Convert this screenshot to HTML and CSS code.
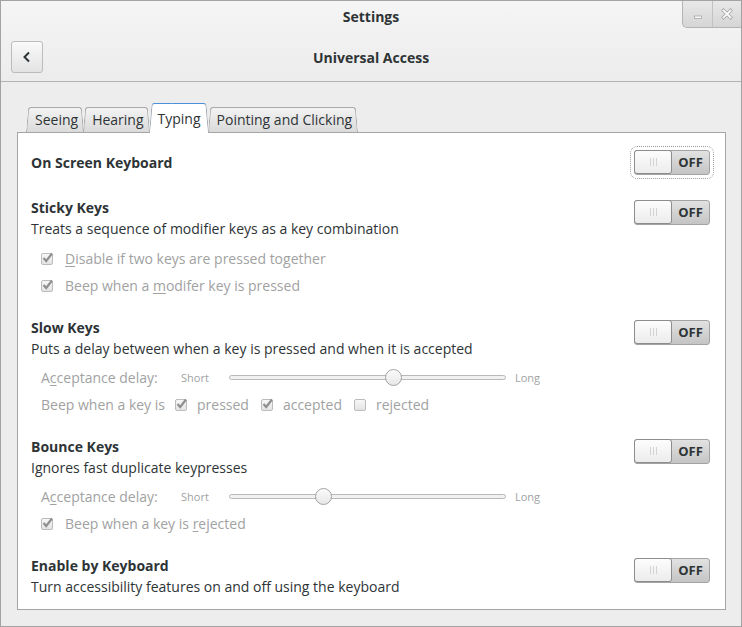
FILE: index.html
```html
<!DOCTYPE html>
<html>
<head>
<meta charset="utf-8">
<link rel="stylesheet" href="styles.css">
</head>
<body>
<div class="window">
  <header class="header">
    <div class="titlebar">
      <span></span>
      <span class="title">Settings</span>
      <div class="wm">
        <span class="wm-btn">
          <svg width="10" height="10" viewBox="0 0 10 10"><rect x="1.5" y="7" width="7" height="2.5" fill="#fbfbfb" stroke="#a6a6a6" stroke-width="0.8"/></svg>
        </span>
        <span class="wm-btn sep">
          <svg width="12" height="12" viewBox="0 0 12 12"><path d="M2.5 2.5 L9.5 9.5 M9.5 2.5 L2.5 9.5" stroke="#a6a6a6" stroke-width="3.4" stroke-linecap="square" fill="none"/><path d="M2.5 2.5 L9.5 9.5 M9.5 2.5 L2.5 9.5" stroke="#fbfbfb" stroke-width="1.8" stroke-linecap="square" fill="none"/></svg>
        </span>
      </div>
    </div>
    <div class="toolbar">
      <span class="back">
        <svg width="14" height="14" viewBox="0 0 14 14"><path d="M9 2.5 L4.5 7 L9 11.5" stroke="#2e3436" stroke-width="2" fill="none"/></svg>
      </span>
      <span class="page-title">Universal Access</span>
      <span></span>
    </div>
  </header>

  <main class="content">
    <div class="tabs">
      <div class="tab">Seeing</div>
      <div class="tab">Hearing</div>
      <div class="tab active">Typing</div>
      <div class="tab">Pointing and Clicking</div>
    </div>
    <div class="panel">
      <section class="section first">
        <div class="info"><div class="heading">On Screen Keyboard</div></div>
        <div class="switch focused"><span class="knob"><i></i><i></i><i></i></span><span class="state">OFF</span></div>
      </section>

      <section class="section">
        <div class="info">
          <div class="heading">Sticky Keys</div>
          <div class="desc">Treats a sequence of modifier keys as a key combination</div>
          <div class="options">
            <div class="opt"><span class="cb checked"><svg width="13" height="13" viewBox="0 0 13 13"><path d="M2.5 6 L5.2 9 L11 1.5" stroke="#8f8f8f" stroke-width="2.2" fill="none"/></svg></span><span class="lbl"><u>D</u>isable if two keys are pressed together</span></div>
            <div class="opt"><span class="cb checked"><svg width="13" height="13" viewBox="0 0 13 13"><path d="M2.5 6 L5.2 9 L11 1.5" stroke="#8f8f8f" stroke-width="2.2" fill="none"/></svg></span><span class="lbl">Beep when a <u>m</u>odifer key is pressed</span></div>
          </div>
        </div>
        <div class="switch"><span class="knob"><i></i><i></i><i></i></span><span class="state">OFF</span></div>
      </section>

      <section class="section">
        <div class="info">
          <div class="heading">Slow Keys</div>
          <div class="desc">Puts a delay between when a key is pressed and when it is accepted</div>
          <div class="options tight">
            <div class="opt">
              <span class="slabel">A<u>c</u>ceptance delay:</span>
              <span class="short">Short</span>
              <span class="slider"><span class="track"></span><span class="thumb" style="left: 164px"></span></span>
              <span class="long">Long</span>
            </div>
            <div class="opt beep">
              <span class="lbl">Beep when a key is</span>
              <span class="check"><span class="cb checked"><svg width="13" height="13" viewBox="0 0 13 13"><path d="M2.5 6 L5.2 9 L11 1.5" stroke="#8f8f8f" stroke-width="2.2" fill="none"/></svg></span><span class="lbl">pressed</span></span>
              <span class="check"><span class="cb checked"><svg width="13" height="13" viewBox="0 0 13 13"><path d="M2.5 6 L5.2 9 L11 1.5" stroke="#8f8f8f" stroke-width="2.2" fill="none"/></svg></span><span class="lbl">accepted</span></span>
              <span class="check"><span class="cb"></span><span class="lbl">rejected</span></span>
            </div>
          </div>
        </div>
        <div class="switch"><span class="knob"><i></i><i></i><i></i></span><span class="state">OFF</span></div>
      </section>

      <section class="section">
        <div class="info">
          <div class="heading">Bounce Keys</div>
          <div class="desc">Ignores fast duplicate keypresses</div>
          <div class="options tight">
            <div class="opt">
              <span class="slabel">A<u>c</u>ceptance delay:</span>
              <span class="short">Short</span>
              <span class="slider"><span class="track"></span><span class="thumb" style="left: 94px"></span></span>
              <span class="long">Long</span>
            </div>
            <div class="opt"><span class="cb checked"><svg width="13" height="13" viewBox="0 0 13 13"><path d="M2.5 6 L5.2 9 L11 1.5" stroke="#8f8f8f" stroke-width="2.2" fill="none"/></svg></span><span class="lbl">Beep when a key is <u>r</u>ejected</span></div>
          </div>
        </div>
        <div class="switch"><span class="knob"><i></i><i></i><i></i></span><span class="state">OFF</span></div>
      </section>

      <section class="section">
        <div class="info">
          <div class="heading">Enable by Keyboard</div>
          <div class="desc">Turn accessibility features on and off using the keyboard</div>
        </div>
        <div class="switch"><span class="knob"><i></i><i></i><i></i></span><span class="state">OFF</span></div>
      </section>
    </div>
  </main>
</div>
</body>
</html>
```

FILE: styles.css
```css
* { box-sizing: border-box; }
html, body { margin: 0; padding: 0; }
body {
  font-family: "Open Sans", "DejaVu Sans", sans-serif;
  font-size: 14px;
  color: #2e3436;
  background: #ededed;
}
u { text-decoration: underline; text-underline-offset: 2px; }

.window {
  width: 742px;
  height: 627px;
  border: 1px solid #a3a3a3;
  background: #ededed;
  display: flex;
  flex-direction: column;
  overflow: hidden;
}

.header {
  height: 81px;
  flex: none;
  border-bottom: 1px solid #b3b3b3;
  background: linear-gradient(#f5f5f5, #ececec);
}
.titlebar {
  height: 32px;
  display: grid;
  grid-template-columns: 1fr auto 1fr;
  align-items: start;
}
.title {
  line-height: 31px;
  font-weight: bold;
  font-size: 14px;
}
.wm {
  justify-self: end;
  display: flex;
  height: 28px;
  margin-top: -1px;
  border-left: 1px solid #b4b4b4;
  border-bottom: 1px solid #b4b4b4;
  border-bottom-left-radius: 5px;
  background: linear-gradient(#e9e9e9, #d5d5d5);
  overflow: hidden;
}
.wm-btn {
  width: 29px;
  height: 27px;
  display: flex;
  align-items: center;
  justify-content: center;
}
.wm-btn.sep { border-left: 1px solid #c2c2c2; }

.toolbar {
  height: 48px;
  display: grid;
  grid-template-columns: 1fr auto 1fr;
  align-items: center;
  padding: 0 10px;
}
.back {
  justify-self: start;
  width: 32px;
  height: 32px;
  border: 1px solid #bcbcbc;
  border-radius: 3px;
  background: linear-gradient(#f9f9f9, #e3e3e3);
  display: flex;
  align-items: center;
  justify-content: center;
}
.page-title {
  font-weight: bold;
  font-size: 14px;
}

.content {
  flex: 1;
  display: flex;
  flex-direction: column;
  padding: 21px 15px 16px 16px;
}

.tabs {
  display: flex;
  align-items: flex-end;
  height: 30px;
  padding-left: 9px;
  margin-bottom: -1px;
  position: relative;
  z-index: 1;
}
.tab {
  position: relative;
  z-index: 0;
  height: 25px;
  margin-bottom: 1px;
  line-height: 25px;
  padding: 0 6px 0 9px;
  font-size: 14px;
  color: #2e3436;
}
.tab + .tab { margin-left: -1px; }
.tab::before, .tab::after {
  content: "";
  position: absolute;
  top: 0;
  bottom: 0;
  width: 55%;
  z-index: -1;
  background: linear-gradient(#f3f3f3, #dadada);
  border-top: 1px solid #a9a9a9;
  transform-origin: bottom;
}
.tab::before {
  left: 0;
  border-left: 1px solid #a9a9a9;
  border-top-left-radius: 3px;
  transform: skewX(-5deg);
}
.tab::after {
  right: 0;
  border-right: 1px solid #a9a9a9;
  border-top-right-radius: 3px;
  transform: skewX(5deg);
}
.tab.active {
  height: 30px;
  margin-bottom: 0;
  line-height: 32px;
  padding: 0 8px 0 9px;
  z-index: 1;
}
.tab.active::before, .tab.active::after {
  background: #ffffff;
  border-top-color: #4a90d9;
}
.tab.active::before { border-left-color: #9ea7b3; }
.tab.active::after { border-right-color: #9ea7b3; }

.panel {
  flex: 1;
  background: #ffffff;
  border: 1px solid #a5a5a5;
  padding: 17px 15px 11px 13px;
  display: flex;
  flex-direction: column;
  gap: 18px;
}

.section {
  display: flex;
  justify-content: space-between;
  align-items: flex-start;
}
.section.first {
  align-items: center;
  margin-bottom: 4px;
}
.heading {
  font-weight: bold;
  line-height: 21px;
}
.desc { line-height: 21px; }
.options {
  margin-top: 6px;
  padding-left: 10px;
  color: #a1a2a2;
}
.options.tight { margin-top: 5px; }
.opt {
  height: 27px;
  display: flex;
  align-items: center;
  gap: 12px;
}
.opt.beep { gap: 10px; }
.check {
  display: inline-flex;
  align-items: center;
  gap: 10px;
  margin-right: 2px;
}

.cb {
  position: relative;
  width: 12px;
  height: 12px;
  flex: none;
  border: 1px solid #bcbcbc;
  border-radius: 2px;
  background: linear-gradient(#f7f7f7, #e3e3e3);
}
.cb svg {
  position: absolute;
  left: -1px;
  top: -2px;
}

.slabel { width: 128px; flex: none; }
.short, .long { font-size: 11px; }
.short { width: 36px; flex: none; }
.slider {
  position: relative;
  width: 277px;
  height: 17px;
  flex: none;
  display: flex;
  align-items: center;
  margin-right: -3px;
}
.track {
  width: 100%;
  height: 5px;
  border: 1px solid #b9b9b9;
  border-radius: 3px;
  background: #f1f1f1;
}
.thumb {
  position: absolute;
  top: 0;
  width: 17px;
  height: 17px;
  margin-left: -8px;
  border: 1px solid #a3a3a3;
  border-radius: 50%;
  background: linear-gradient(#fbfbfb, #e7e7e7);
}

.switch {
  flex: none;
  width: 76px;
  height: 25px;
  margin-top: 3px;
  border: 1px solid #a3a3a3;
  border-radius: 3px;
  background: linear-gradient(#e2e2e2, #c4c4c4);
  display: flex;
  align-items: stretch;
}
.section.first .switch { margin-top: 0; }
.switch.focused {
  outline: 1px dotted #9a9a9a;
  outline-offset: 3px;
}
.knob {
  width: 38px;
  margin: -1px 0 0 -1px;
  height: 24px;
  border: 1px solid #8d8d8d;
  border-radius: 3px;
  background: linear-gradient(#fdfdfd, #ececec);
  display: flex;
  align-items: center;
  justify-content: center;
  gap: 2px;
}
.knob i {
  display: block;
  width: 1px;
  height: 8px;
  background: #d3d3d3;
}
.state {
  flex: 1;
  display: flex;
  align-items: center;
  justify-content: center;
  font-weight: bold;
  font-size: 13px;
  color: #2e3436;
  padding-bottom: 1px;
}
```
